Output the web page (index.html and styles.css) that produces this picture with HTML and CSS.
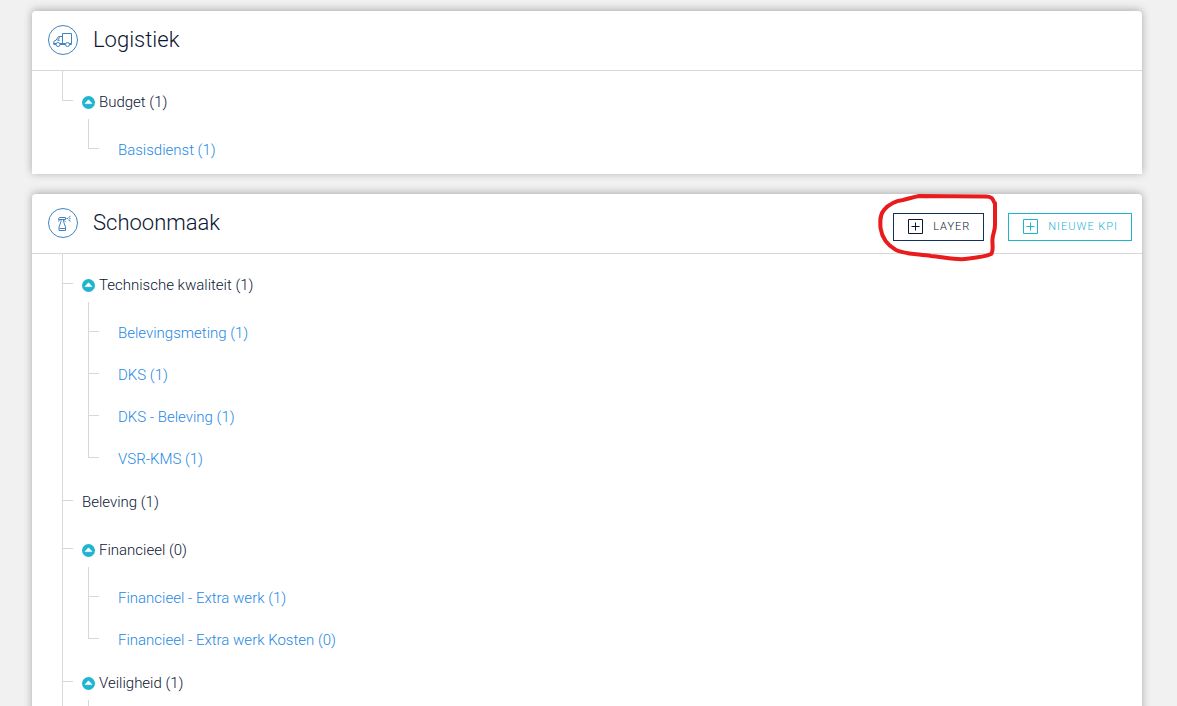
FILE: index.html
```html
<!DOCTYPE html>
<html lang="nl">
<head>
    <meta charset="UTF-8">
    <meta name="viewport" content="width=device-width, initial-scale=1.0">
    <title>Logistiek en Schoonmaak</title>
    <link rel="stylesheet" href="styles.css">
</head>
<body>
    <svg class="sprite" aria-hidden="true">
        <symbol id="arrow-up" viewBox="0 0 13 13">
            <circle cx="6.5" cy="6.5" r="6.5" fill="#1fb5d0"/>
            <path d="M6.5 3.8 10 7.6H3z" fill="#fff" stroke="#fff" stroke-width=".6" stroke-linejoin="round"/>
        </symbol>
        <symbol id="plus-box" viewBox="0 0 15 15">
            <path d="M.5.5h14v14H.5zM7.5 3.5v8M3.5 7.5h8" fill="none" stroke="currentColor"/>
        </symbol>
    </svg>

    <main class="page">
        <section class="card">
            <header class="card-header">
                <span class="card-icon">
                    <svg width="20" height="16" viewBox="0 0 20 16">
                        <path d="M9.5 1.500h9v10h-9zM9.500 4.500H5.500L3 8.200.8 9.300v3.200h2M7 12.500h5.500M16.500 12.500h2v-1M.8 11.500h8.700M4.600 8.300l2-3M4.600 8.300h2.200" fill="none" stroke="currentColor"/>
                        <circle cx="5" cy="12.500" r="2" fill="#fff" stroke="currentColor"/>
                        <circle cx="14.500" cy="12.500" r="2" fill="#fff" stroke="currentColor"/>
                    </svg>
                </span>
                <h2>Logistiek</h2>
            </header>
            <ul class="tree">
                <li>
                    <div class="row">
                        <button class="toggle" aria-label="Budget inklappen"><svg><use href="#arrow-up"/></svg></button>
                        Budget (1)
                    </div>
                    <ul class="subtree">
                        <li><a class="row" href="#">Basisdienst (1)</a></li>
                    </ul>
                </li>
            </ul>
        </section>

        <section class="card">
            <header class="card-header">
                <span class="card-icon">
                    <svg width="20" height="18" viewBox="0 0 20 18">
                        <path d="M5.500 5.500v-1l1.500-1h5.500v2zM8 5.500v2l-2 5.500v3.500h6.500V13L10.500 7.500v-2M6.500 5.500 5.500 7.500M11.500 6.500l1 1.500M6.500 14.500h5.500" fill="none" stroke="currentColor"/>
                        <path d="M13.500 4.500h1.500M15.500 3.500l2-1.300M16 4.800h1.500M15.500 6l2 1.300" fill="none" stroke="currentColor"/>
                    </svg>
                </span>
                <h2>Schoonmaak</h2>
                <div class="actions">
                    <div class="marked">
                        <button class="btn btn-dark"><svg><use href="#plus-box"/></svg>Layer</button>
                        <svg class="marker" viewBox="0 0 130 80" aria-hidden="true">
                            <path d="M123 17C122 13 120 11.500 115 11.500L48 11C42 12 37 14 32 15C24 16 18 19 13 25C9 29 9 35 9.500 43C11 53 16 60 25 65C33 69 46 69 60 71C72 72 84 75 94 74C103 73 116 71 120 69C123 66 121 60 121.500 54C122 48 124 46 124 40L124 18" fill="none" stroke="#e81c1c" stroke-width="4" stroke-linecap="round" stroke-linejoin="round"/>
                        </svg>
                    </div>
                    <button class="btn btn-light"><svg><use href="#plus-box"/></svg>Nieuwe KPI</button>
                </div>
            </header>
            <ul class="tree">
                <li>
                    <div class="row">
                        <button class="toggle" aria-label="Technische kwaliteit inklappen"><svg><use href="#arrow-up"/></svg></button>
                        Technische kwaliteit (1)
                    </div>
                    <ul class="subtree">
                        <li><a class="row" href="#">Belevingsmeting (1)</a></li>
                        <li><a class="row" href="#">DKS (1)</a></li>
                        <li><a class="row" href="#">DKS - Beleving (1)</a></li>
                        <li><a class="row" href="#">VSR-KMS (1)</a></li>
                    </ul>
                </li>
                <li class="leaf">
                    <div class="row">Beleving (1)</div>
                </li>
                <li>
                    <div class="row">
                        <button class="toggle" aria-label="Financieel inklappen"><svg><use href="#arrow-up"/></svg></button>
                        Financieel (0)
                    </div>
                    <ul class="subtree">
                        <li><a class="row" href="#">Financieel - Extra werk (1)</a></li>
                        <li><a class="row" href="#">Financieel - Extra werk Kosten (0)</a></li>
                    </ul>
                </li>
                <li>
                    <div class="row">
                        <button class="toggle" aria-label="Veiligheid inklappen"><svg><use href="#arrow-up"/></svg></button>
                        Veiligheid (1)
                    </div>
                    <ul class="subtree">
                        <li><div class="row"></div></li>
                    </ul>
                </li>
                <li><div class="row"></div></li>
            </ul>
        </section>
    </main>
</body>
</html>
```
FILE: styles.css
```css
* {
    margin: 0;
    padding: 0;
    box-sizing: border-box;
}

body {
    background: #f1f1f1;
    color: #0b1633;
    font-family: Roboto, "Liberation Sans", sans-serif;
    font-size: 15px;
    font-weight: 300;
}

.sprite {
    position: absolute;
    width: 0;
    height: 0;
}

.page {
    display: flex;
    flex-direction: column;
    gap: 20px;
    height: 100vh;
    padding: 11px 35px 0 32px;
    overflow: hidden;
}

.card {
    flex-shrink: 0;
    background: #fff;
    border-radius: 4px 4px 0 0;
    box-shadow: 0 -1px 8px rgba(0, 0, 0, 0.3);
}

.card-header {
    display: flex;
    align-items: center;
    height: 60px;
    padding: 0 10px 2px 16px;
    border-bottom: 1px solid #d8d8d8;
}

.card-header h2 {
    margin-left: 15px;
    font-size: 22px;
    font-weight: 300;
    line-height: 30px;
}

.card-icon {
    display: flex;
    align-items: center;
    justify-content: center;
    width: 30px;
    height: 30px;
    border: 1px solid #3f83c0;
    border-radius: 50%;
    color: #3f83c0;
}

.actions {
    display: flex;
    gap: 24px;
    margin: 8px 0 0 auto;
}

.btn {
    display: flex;
    align-items: center;
    gap: 10px;
    height: 28px;
    padding: 0 13px 0 14px;
    background: #fff;
    border: 1px solid;
    font-family: inherit;
    font-size: 11px;
    font-weight: 300;
    letter-spacing: 1px;
    text-transform: uppercase;
    cursor: pointer;
}

.btn svg {
    width: 15px;
    height: 15px;
}

.btn-dark {
    border-color: #14305f;
    color: #0b1633;
}

.btn-light {
    border-color: #1fb5d0;
    color: #1fb5d0;
}

.marked {
    position: relative;
}

.marker {
    position: absolute;
    top: -28px;
    left: -22px;
    width: 130px;
    height: 80px;
    pointer-events: none;
}

/* tree */
.tree,
.subtree {
    list-style: none;
}

.tree {
    padding: 10px 0 2px 30px;
}

.subtree {
    padding: 6px 0 1px 6px;
}

.tree li {
    position: relative;
    padding-left: 20px;
}

.tree .subtree li {
    padding-left: 30px;
}

.tree .leaf {
    padding-bottom: 6px;
}

.tree li::before,
.tree li::after {
    content: "";
    position: absolute;
    left: 0;
    background: #d8d8d8;
}

.tree li::before {
    top: 0;
    bottom: 0;
    width: 1px;
}

.tree li::after {
    top: 19px;
    width: 11px;
    height: 1px;
}

.tree li:first-child::before {
    top: -10px;
}

.tree li:last-child::before {
    bottom: auto;
    height: 20px;
}

.tree li:only-child::before {
    height: 30px;
}

.row {
    display: flex;
    align-items: center;
    gap: 4px;
    height: 42px;
}

a.row {
    width: fit-content;
    color: #1e88e5;
    text-decoration: none;
}

.toggle {
    width: 13px;
    height: 13px;
    background: none;
    border: 0;
    cursor: pointer;
}

.toggle svg {
    display: block;
    width: 13px;
    height: 13px;
}
```
